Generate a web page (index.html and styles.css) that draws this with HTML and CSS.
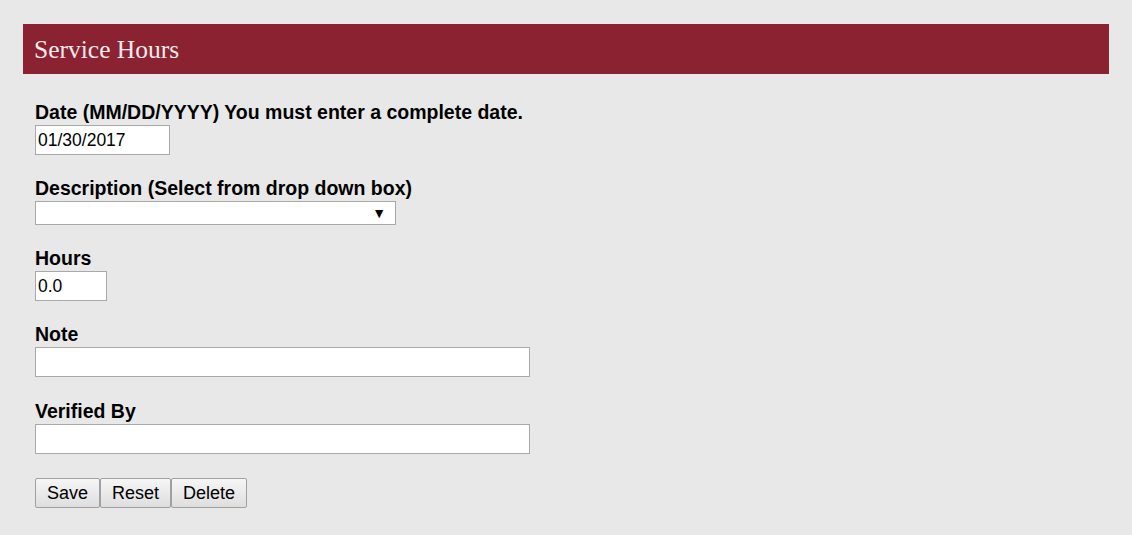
FILE: index.html
```html
<!DOCTYPE html>
<html>
<head>
  <title>Service Hours</title>
  <link rel="stylesheet" href="styles.css">
</head>
<body>
  <div class="page">
    <div class="title-bar">
      <h1>Service Hours</h1>
    </div>

    <form class="hours-form">
      <div class="field">
        <label for="date">Date (MM/DD/YYYY) You must enter a complete date.</label>
        <input type="text" id="date" class="date-input" value="01/30/2017">
      </div>

      <div class="field">
        <label for="desc">Description (Select from drop down box)</label>
        <div class="select-box" id="desc">
          <span class="arrow">&#9660;</span>
        </div>
      </div>

      <div class="field">
        <label for="hours">Hours</label>
        <input type="text" id="hours" class="hours-input" value="0.0">
      </div>

      <div class="field note-field">
        <label for="note">Note</label>
        <input type="text" id="note" class="wide-input">
      </div>

      <div class="field">
        <label for="verified">Verified By</label>
        <input type="text" id="verified" class="wide-input">
      </div>

      <div class="buttons">
        <button type="button" class="btn-save">Save</button>
        <button type="button" class="btn-reset">Reset</button>
        <button type="button" class="btn-delete">Delete</button>
      </div>
    </form>
  </div>
</body>
</html>
```

FILE: styles.css
```css
body {
  margin: 0;
  background-color: #e8e8e8;
  font-family: "Liberation Sans", Arial, sans-serif;
}

.page {
  padding: 24px 23px;
}

.title-bar {
  height: 50px;
  background-color: #8b2232;
  display: flex;
  align-items: center;
  padding-left: 11px;
}

.title-bar h1 {
  margin: 0;
  padding-top: 2px;
  font-family: "Liberation Serif", "Times New Roman", serif;
  font-weight: normal;
  font-size: 25.5px;
  color: #f6eaec;
}

.hours-form {
  padding: 27px 12px 0;
}

.field {
  margin-bottom: 22px;
}

.note-field {
  margin-bottom: 23px;
}

label {
  display: block;
  font-weight: bold;
  font-size: 19.5px;
  line-height: 22px;
  color: #000000;
  margin-bottom: 2px;
}

input[type="text"] {
  box-sizing: border-box;
  display: block;
  height: 30px;
  margin: 0;
  padding: 0 2px;
  border: 1px solid #a9a9a9;
  background-color: #ffffff;
  font-family: "Liberation Sans", Arial, sans-serif;
  font-size: 17.5px;
  color: #000000;
  outline: none;
}

.date-input {
  width: 135px;
}

.hours-input {
  width: 72px;
}

.wide-input {
  width: 495px;
}

.select-box {
  box-sizing: border-box;
  width: 361px;
  height: 24px;
  border: 1px solid #a9a9a9;
  background-color: #ffffff;
  display: flex;
  align-items: center;
  justify-content: flex-end;
  padding-right: 9px;
}

.select-box .arrow {
  font-size: 14px;
  color: #000000;
}

.buttons {
  display: flex;
  padding-top: 2px;
}

.buttons button {
  box-sizing: border-box;
  height: 30px;
  margin: 0;
  padding: 0 10px;
  border: 1px solid #a0a0a0;
  border-radius: 2px;
  background: linear-gradient(#f6f6f6, #dedede);
  font-family: "Liberation Sans", Arial, sans-serif;
  font-size: 18px;
  color: #000000;
  cursor: pointer;
}

.btn-save {
  width: 65px;
}

.btn-reset {
  width: 71px;
}

.btn-delete {
  width: 76px;
}
```
